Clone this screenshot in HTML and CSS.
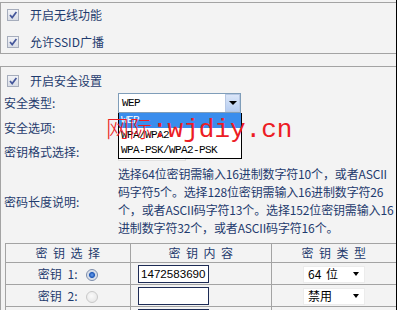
FILE: index.html
```html
<!DOCTYPE html>
<html lang="zh-CN">
<head>
  <meta charset="UTF-8">
  <title>无线安全设置</title>
  <link rel="stylesheet" href="styles.css">
</head>
<body>

  <div class="page">
    <div class="panel panel-top">
      <div class="check-row">
        <span class="cbox"><svg width="10" height="10" viewBox="0 0 10 10"><path d="M2 5 L4.2 7.6 L8.4 2" fill="none" stroke="#44569a" stroke-width="1.7"/></svg></span>
        <span>开启无线功能</span>
      </div>
      <div class="check-row">
        <span class="cbox"><svg width="10" height="10" viewBox="0 0 10 10"><path d="M2 5 L4.2 7.6 L8.4 2" fill="none" stroke="#44569a" stroke-width="1.7"/></svg></span>
        <span>允许SSID广播</span>
      </div>
    </div>

    <div class="panel panel-sec">
      <div class="check-row">
        <span class="cbox"><svg width="10" height="10" viewBox="0 0 10 10"><path d="M2 5 L4.2 7.6 L8.4 2" fill="none" stroke="#44569a" stroke-width="1.7"/></svg></span>
        <span>开启安全设置</span>
      </div>

      <div class="field row-type">
        <span class="label">安全类型:</span>
        <div class="select-wrap">
          <div class="select sel-type">
            <span class="sel-text">WEP</span>
            <span class="sel-btn"><i class="tri"></i></span>
          </div>
          <!-- open dropdown -->
          <ul class="listbox">
            <li class="on">WEP</li>
            <li>WPA/WPA2</li>
            <li>WPA-PSK/WPA2-PSK</li>
          </ul>
        </div>
      </div>

      <div class="field row-opt">
        <span class="label">安全选项:</span>
        <div class="select sel-plain"></div>
      </div>

      <div class="field row-fmt">
        <span class="label">密钥格式选择:</span>
        <div class="select sel-plain sel-fmt"></div>
      </div>

      <div class="field row-desc">
        <span class="label">密码长度说明:</span>
        <p class="desc">选择64位密钥需输入16进制数字符10个，或者ASCII<br>码字符5个。选择128位密钥需输入16进制数字符26<br>个，或者ASCII码字符13个。选择152位密钥需输入16<br>进制数字符32个，或者ASCII码字符16个。</p>
      </div>

      <table class="keys">
        <colgroup>
          <col class="c1"><col class="c2"><col class="c3">
        </colgroup>
        <tr class="head">
          <th>密钥选择</th>
          <th>密钥内容</th>
          <th>密钥类型</th>
        </tr>
        <tr>
          <td class="k-name">密钥 1: <span class="radio checked"></span></td>
          <td class="k-val"><input class="key-input" type="text" value="1472583690"></td>
          <td class="k-type"><span class="sel-key">64 位<i class="tri small"></i></span></td>
        </tr>
        <tr>
          <td class="k-name">密钥 2: <span class="radio"></span></td>
          <td class="k-val"><input class="key-input" type="text" value=""></td>
          <td class="k-type"><span class="sel-key">禁用<i class="tri small"></i></span></td>
        </tr>
        <!-- next row, only its top edge shows -->
        <tr class="peek">
          <td class="k-name"></td>
          <td class="k-val"><input class="key-input" type="text" value=""></td>
          <td class="k-type"><span class="sel-key"></span></td>
        </tr>
      </table>
    </div>

    <div class="watermark"><span class="wm-cjk">网际</span>:wjdiy.cn</div>
  </div>

</body>
</html>
```

FILE: styles.css
```css
body {
  margin: 0;
  background: #f3f3f3;
  font-family: "Noto Sans CJK SC", sans-serif;
  font-size: 12px;
  color: #1f3b6e;
  overflow: hidden;
}
.page {
  position: relative;
  width: 396px;
  height: 310px;
  border-right: 1px solid #000;
  overflow: hidden;
}
.panel {
  border: 1px solid #a3a3a3;
  border-right: none;
  box-sizing: border-box;
}
.panel-top {
  margin-top: 2px;
  height: 52px;
  padding-top: 3px;
  display: flex;
  flex-direction: column;
  gap: 9px;
}
.panel-sec {
  margin-top: 12px;
  padding-top: 5px;
  height: 260px;
}
.check-row {
  display: flex;
  align-items: center;
  height: 18px;
  padding-left: 6px;
  gap: 11px;
  line-height: 18px;
}
.cbox {
  width: 12px;
  height: 12px;
  box-sizing: border-box;
  border: 1px solid #a6adbc;
  background: linear-gradient(#f2f3f7, #d9dde6);
  display: flex;
  align-items: center;
  justify-content: center;
}
.field {
  display: flex;
  align-items: center;
}
.label {
  width: 117px;
  flex-shrink: 0;
  padding-left: 3px;
  box-sizing: border-box;
}
.row-type { height: 25px; }
.row-opt { height: 25px; }
.row-fmt { height: 22px; }
.row-desc { margin-top: 3px; }
.desc {
  margin: 0;
  line-height: 18px;
  white-space: nowrap;
  letter-spacing: -0.15px;
}
.select-wrap {
  position: relative;
}
.select {
  box-sizing: border-box;
  background: #fff;
  height: 20px;
}
.sel-type {
  width: 123px;
  border: 1px solid #7f9db9;
  display: flex;
  align-items: center;
  justify-content: space-between;
  color: #000;
}
.sel-text,
.listbox li {
  font-family: "Liberation Mono", monospace;
  font-size: 11px;
  letter-spacing: -0.6px;
}
.sel-text {
  padding-left: 3px;
}
.sel-btn {
  width: 15px;
  height: 18px;
  box-sizing: border-box;
  border: 1px solid #b7c8e4;
  background: linear-gradient(#dbe6f8, #b6cdf1);
  display: flex;
  align-items: center;
  justify-content: center;
}
.tri {
  width: 0;
  height: 0;
  border-left: 4px solid transparent;
  border-right: 4px solid transparent;
  border-top: 4px solid #000;
}
.tri.small {
  border-left-width: 3.5px;
  border-right-width: 3.5px;
}
.listbox {
  position: absolute;
  left: 0;
  top: 100%;
  width: 124px;
  margin: 0;
  padding: 0;
  list-style: none;
  background: #fff;
  border: 1px solid #000;
  border-top: none;
  box-sizing: border-box;
  color: #000;
}
.listbox li {
  height: 15px;
  line-height: 15px;
  padding-left: 2px;
}
.listbox li.on {
  background: #3a8ded;
  color: #fff;
}
.sel-plain {
  width: 100px;
  border: 1px solid #e2e2e2;
}
.sel-fmt {
  width: 68px;
}
.keys {
  margin: 6px 0 0 4px;
  border-collapse: collapse;
  width: 391px;
  table-layout: fixed;
}
.c1 { width: 125px; }
.c2 { width: 141px; }
.c3 { width: 125px; }
.keys th,
.keys td {
  border: 1px solid #a3a3a3;
  padding: 0;
  line-height: 16px;
}
.keys th {
  font-weight: normal;
  letter-spacing: 5.5px;
  padding-left: 5px;
}
.keys tr { height: 22px; }
.keys tr.head { height: 19px; }
.k-name {
  text-align: center;
  word-spacing: 3px;
}
.k-val {
  padding-left: 7px !important;
}
.k-type {
  text-align: center;
}
.radio {
  display: inline-block;
  width: 12px;
  height: 12px;
  box-sizing: border-box;
  border-radius: 50%;
  border: 1px solid #c9c9c9;
  background: radial-gradient(circle at 45% 40%, #fafafa, #e2e2e2);
  vertical-align: middle;
  margin-left: 3px;
}
.radio.checked {
  border-color: #7d8daa;
  background: radial-gradient(circle, #6aa0f0 0, #1e58b8 2.5px, #d0d8e6 3.5px, #eef1f6 6px);
}
.key-input {
  width: 71px;
  height: 18px;
  box-sizing: border-box;
  border: 1px solid #1d2b55;
  background: #fff;
  font-family: "Liberation Sans", sans-serif;
  font-size: 11.6px;
  color: #000;
  padding: 0 1px 0 2px;
  margin: 0;
  vertical-align: middle;
}
.peek .key-input {
  border-top: 3px solid #1d2b55;
}
.sel-key {
  display: inline-flex;
  align-items: center;
  justify-content: space-between;
  width: 62px;
  height: 17px;
  box-sizing: border-box;
  background: #fff;
  border: 1px solid #ececec;
  color: #000;
  padding: 0 5px 0 4px;
  vertical-align: middle;
  word-spacing: 2px;
}
.watermark {
  position: absolute;
  left: 106px;
  top: 114px;
  font-family: "Liberation Mono", monospace;
  font-size: 26px;
  line-height: 26px;
  color: #ec1c24;
  white-space: nowrap;
}
.wm-cjk {
  font-family: "Noto Sans CJK SC", sans-serif;
  font-size: 23px;
  font-weight: 300;
}
```
